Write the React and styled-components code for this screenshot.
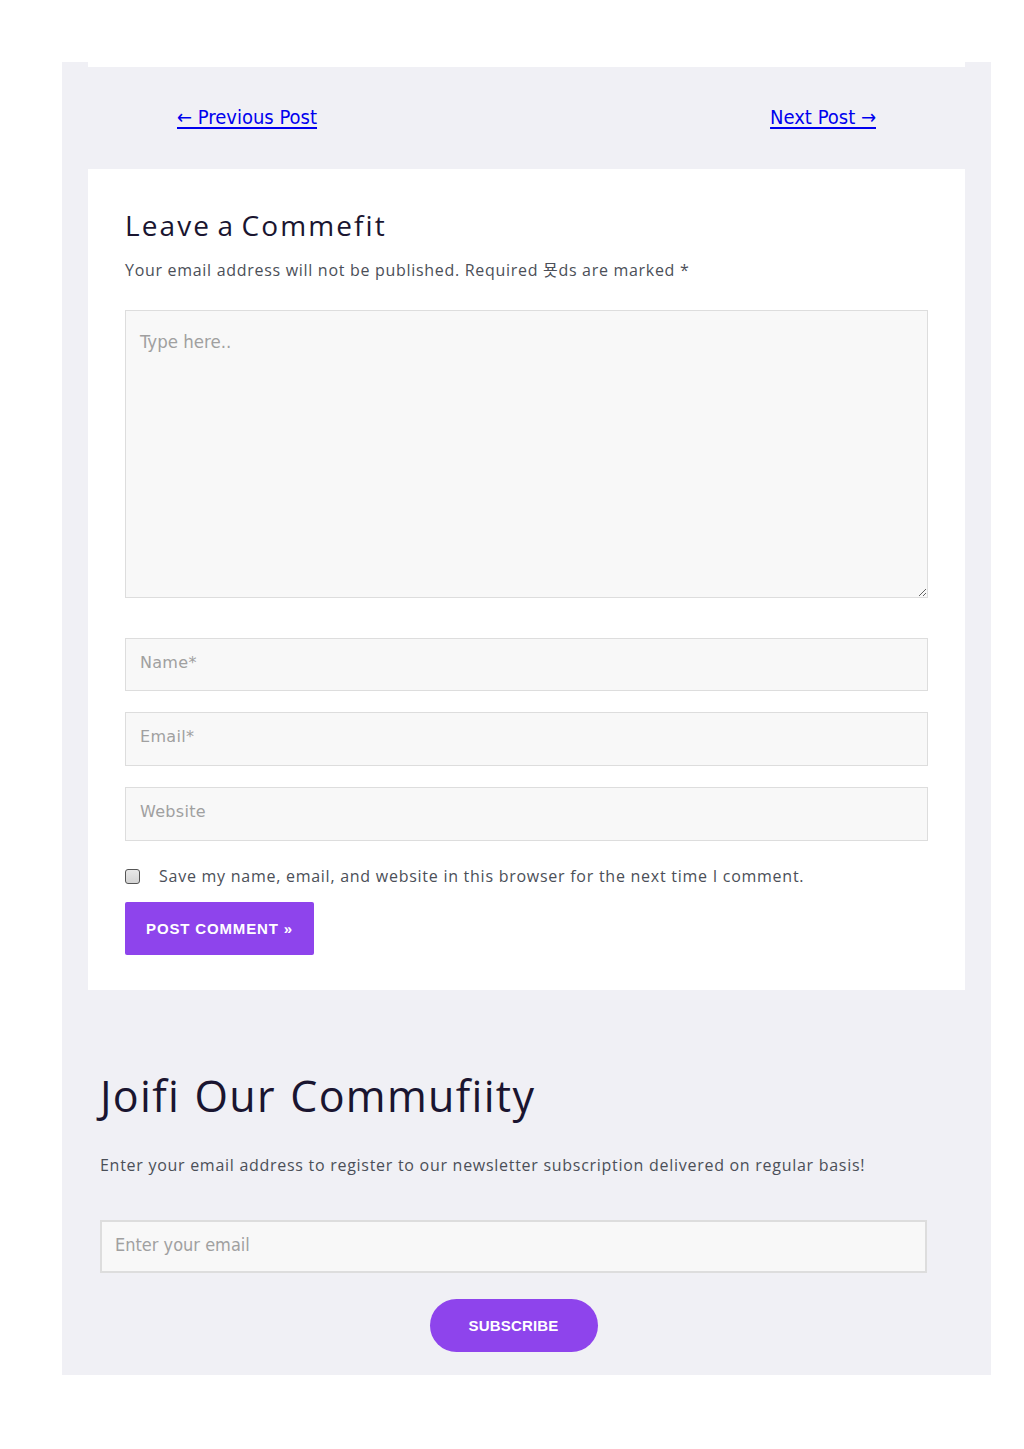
import React from "react";
import styled, { createGlobalStyle } from "styled-components";

const Global = createGlobalStyle`
  html, body { margin: 0; padding: 0; background: #ffffff; }
  body { font-family: "Open Sans", "Noto Sans CJK KR", sans-serif; }
  * { box-sizing: border-box; }
`;

const Page = styled.div`
  width: 1024px;
  min-height: 1449px;
  padding: 62px 33px 75px 62px;
`;

const Shell = styled.div`
  width: 929px;
  background: #f0f0f5;
  padding: 0 26px;
`;

const TopCardEdge = styled.div`
  height: 5px;
  background: #ffffff;
`;

const PostNav = styled.nav`
  height: 102px;
  display: flex;
  align-items: center;
  justify-content: space-between;
  padding: 0 89px 2px 89px;
`;

const NavLink = styled.a`
  font-family: "DejaVu Sans Condensed", "DejaVu Sans", sans-serif;
  font-stretch: condensed;
  font-size: 20px;
  color: #0000ee;
  text-decoration: underline;
  text-underline-offset: 3px;
  cursor: pointer;
`;

const CommentCard = styled.section`
  background: #ffffff;
  padding: 36px 37px 35px 37px;
`;

const CardTitle = styled.h3`
  margin: 0;
  font-family: "Open Sans", sans-serif;
  font-weight: 400;
  font-size: 28px;
  line-height: 40px;
  letter-spacing: 2.1px;
  word-spacing: -3px;
  color: #1a1530;
`;

const Notes = styled.p`
  margin: 12px 0 0;
  font-size: 16px;
  line-height: 26px;
  letter-spacing: 0.7px;
  color: #4b4f58;
`;

const TextArea = styled.textarea`
  display: block;
  width: 803px;
  height: 288px;
  margin-top: 27px;
  background: #f8f8f8;
  border: 1px solid #dddddd;
  border-radius: 0;
  padding: 20px 14px;
  font-family: "DejaVu Sans Condensed", "DejaVu Sans", sans-serif;
  font-stretch: condensed;
  font-size: 18.5px;
  color: #444;
  resize: vertical;
  outline: none;
  &::placeholder { color: #a0a0a0; }
`;

const Fields = styled.div`
  display: flex;
  flex-direction: column;
  gap: 21px;
  margin-top: 40px;
`;

const Field = styled.input`
  display: block;
  width: 803px;
  height: ${(p) => p.$h || 53}px;
  background: #f8f8f8;
  border: 1px solid #dddddd;
  border-radius: 0;
  padding: 0 14px 5px;
  font-family: "DejaVu Sans", sans-serif;
  font-size: 16px;
  letter-spacing: 0.3px;
  color: #444;
  outline: none;
  &::placeholder { color: #a0a0a0; }
`;

const ConsentRow = styled.label`
  display: flex;
  align-items: center;
  gap: 19px;
  margin-top: 24px;
  font-size: 16px;
  letter-spacing: 0.74px;
  color: #4b4f58;
`;

const Box = styled.span`
  width: 15px;
  height: 15px;
  border: 1px solid #555;
  border-radius: 3px;
  background: linear-gradient(#e8e8e8, #d4d4d4);
  flex: none;
`;

const PostButton = styled.button`
  display: block;
  margin-top: 15px;
  width: 189px;
  height: 53px;
  background: #8e44ec;
  border: none;
  border-radius: 2px;
  color: #ffffff;
  font-family: "Liberation Sans", Arial, sans-serif;
  font-weight: 700;
  font-size: 15px;
  letter-spacing: 0.85px;
  cursor: pointer;
`;

const Community = styled.section`
  padding: 78px 38px 23px 12px;
`;

const BigTitle = styled.h2`
  margin: 0;
  font-family: "Open Sans", sans-serif;
  font-weight: 400;
  font-size: 43px;
  line-height: 56px;
  letter-spacing: 1.3px;
  word-spacing: 2px;
  color: #1a1530;
`;

const Lead = styled.p`
  margin: 28px 0 0;
  font-size: 16px;
  line-height: 26px;
  letter-spacing: 0.72px;
  color: #4b4f58;
`;

const EmailField = styled.input`
  display: block;
  width: 827px;
  height: 53px;
  margin-top: 42px;
  background: #f8f8f8;
  border: 2px solid #dddddd;
  padding: 0 13px 4px;
  font-family: "DejaVu Sans Condensed", "DejaVu Sans", sans-serif;
  font-stretch: condensed;
  font-size: 18px;
  outline: none;
  &::placeholder { color: #a0a0a0; }
`;

const SubscribeWrap = styled.div`
  width: 827px;
  display: flex;
  justify-content: center;
  margin-top: 26px;
`;

const SubscribeButton = styled.button`
  width: 168px;
  height: 53px;
  border: none;
  border-radius: 27px;
  background: #8e44ec;
  color: #ffffff;
  font-family: "Liberation Sans", Arial, sans-serif;
  font-weight: 700;
  font-size: 15px;
  letter-spacing: 0.2px;
  cursor: pointer;
`;

export default function App() {
  return (
    <>
      <Global />
      <Page>
        <Shell>
          <TopCardEdge />
          <PostNav>
            <NavLink>← Previous Post</NavLink>
            <NavLink>Next Post →</NavLink>
          </PostNav>
          <CommentCard>
            <CardTitle>Leave a Commefit</CardTitle>
            <Notes>Your email address will not be published. Required 묫ds are marked *</Notes>
            <TextArea placeholder="Type here.." />
            <Fields>
              <Field placeholder="Name*" $h={53} />
              <Field placeholder="Email*" $h={54} />
              <Field placeholder="Website" $h={54} />
            </Fields>
            <ConsentRow>
              <Box />
              Save my name, email, and website in this browser for the next time I comment.
            </ConsentRow>
            <PostButton>POST COMMENT »</PostButton>
          </CommentCard>
          <Community>
            <BigTitle>Joifi Our Commufiity</BigTitle>
            <Lead>Enter your email address to register to our newsletter subscription delivered on regular basis!</Lead>
            <EmailField placeholder="Enter your email" />
            <SubscribeWrap>
              <SubscribeButton>SUBSCRIBE</SubscribeButton>
            </SubscribeWrap>
          </Community>
        </Shell>
      </Page>
    </>
  );
}
